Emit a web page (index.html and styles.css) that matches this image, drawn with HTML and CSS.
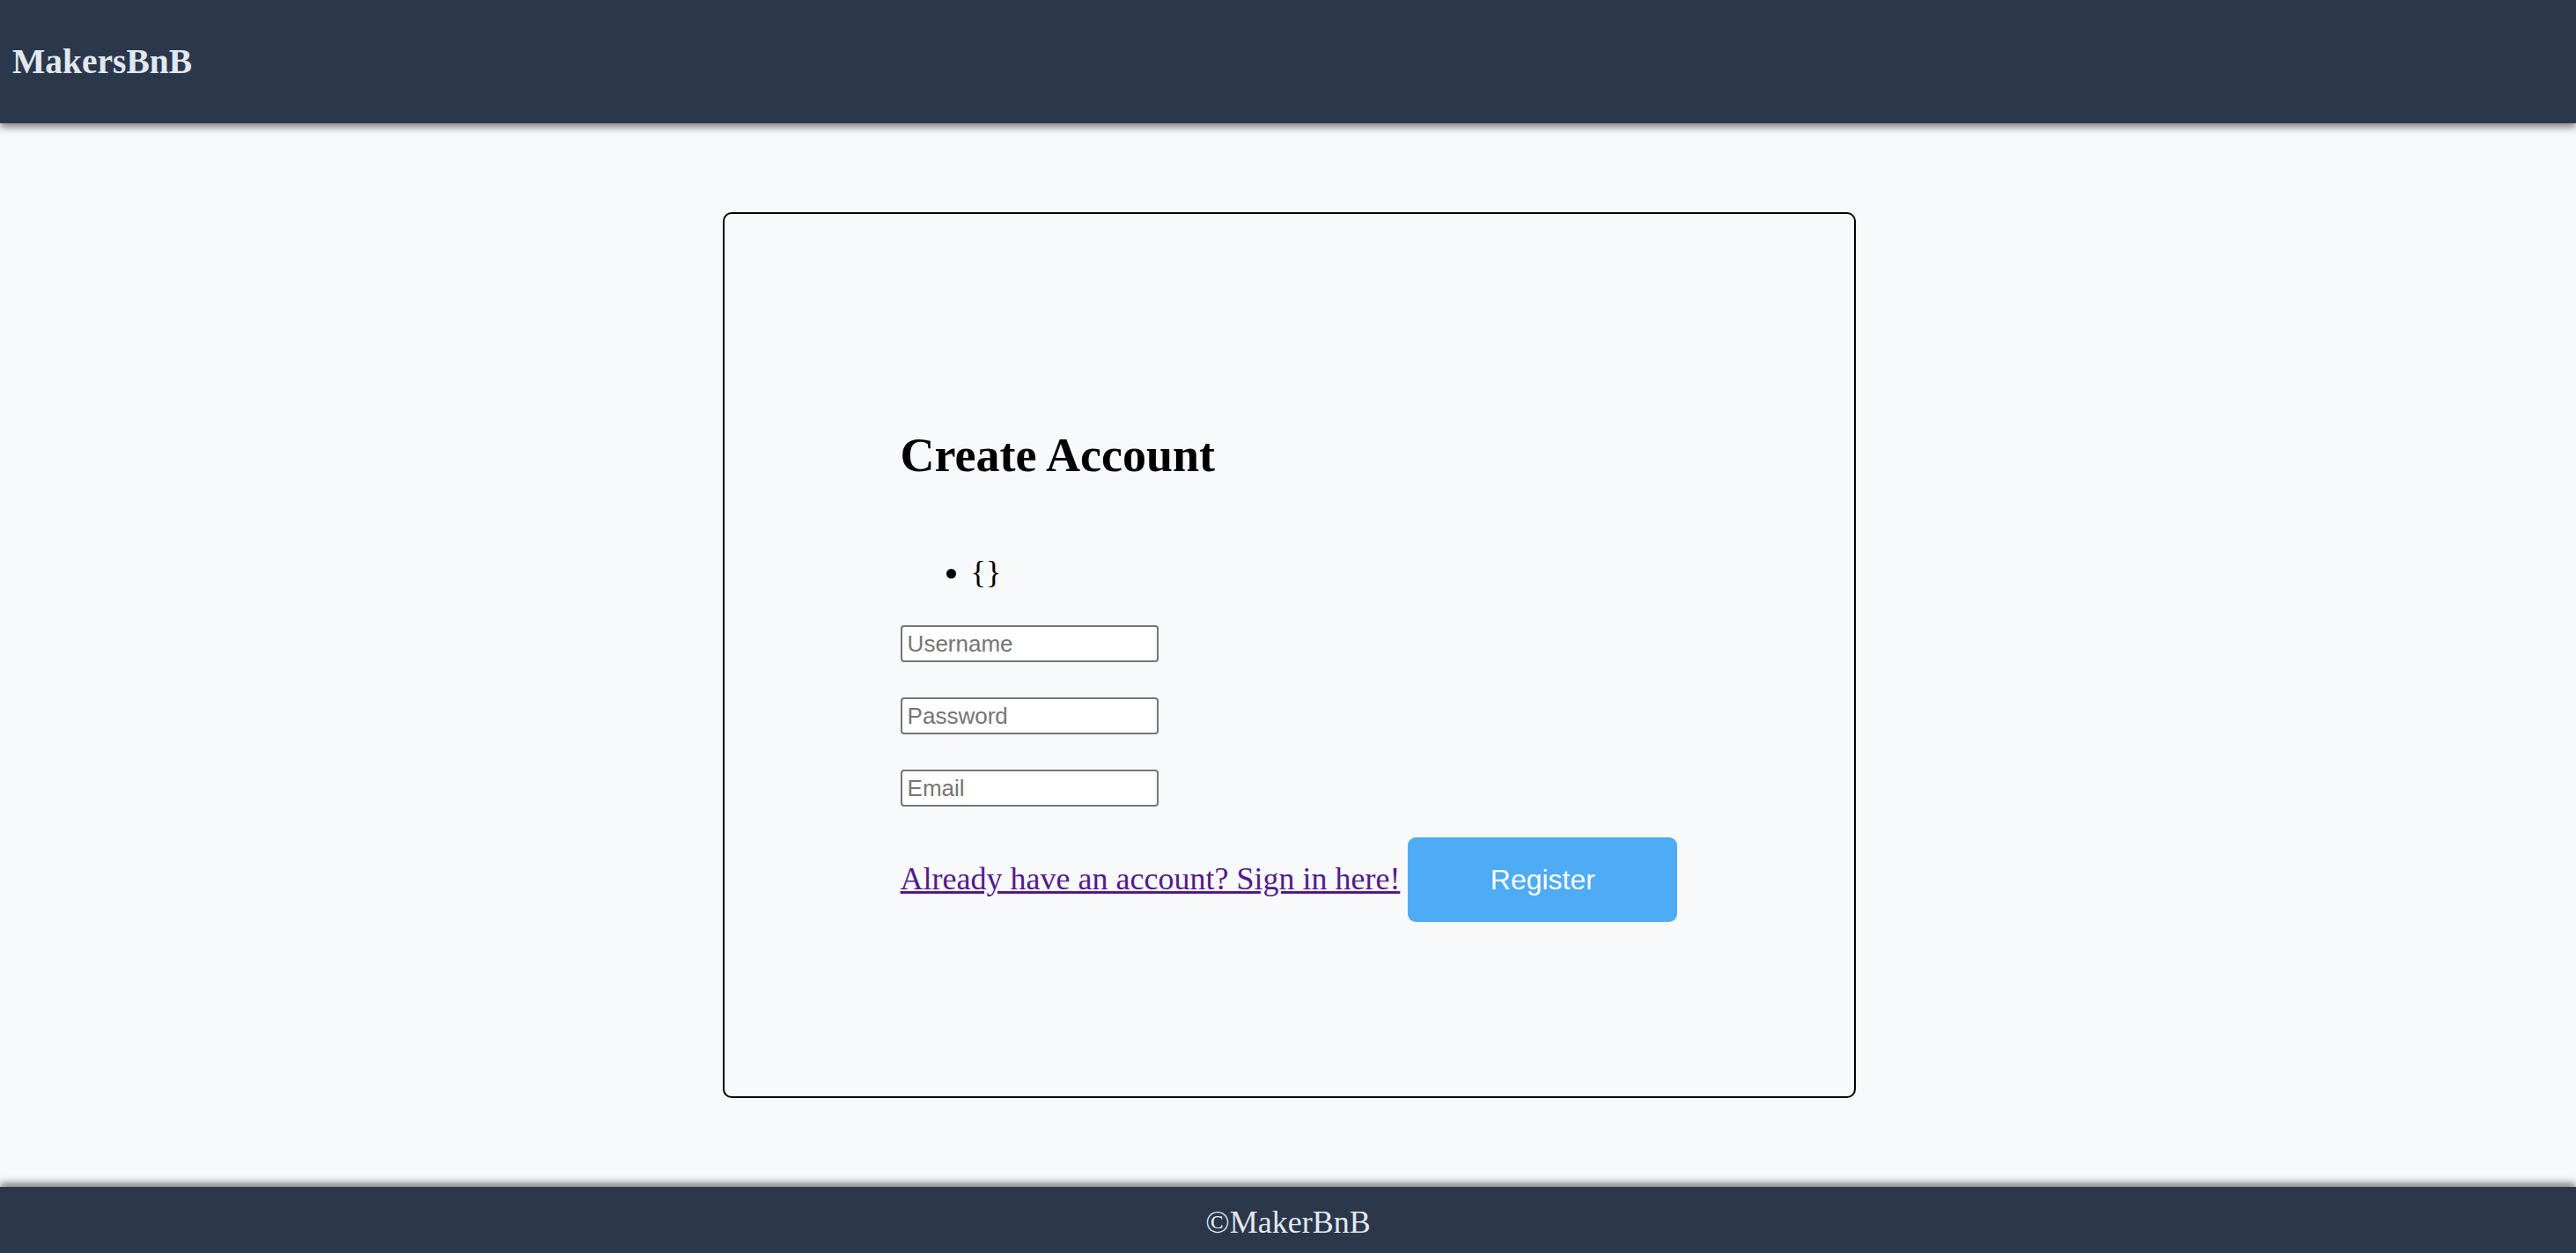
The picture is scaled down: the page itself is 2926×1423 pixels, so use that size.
FILE: index.html
```html
<!DOCTYPE html>
<html lang="en">
<head>
<meta charset="utf-8">
<title>MakersBnB</title>
<link rel="stylesheet" href="styles.css">
</head>
<body>
<header class="site-header">
  <span class="brand">MakersBnB</span>
</header>
<main class="page">
  <section class="card">
    <div class="card-inner">
      <h2 class="title">Create Account</h2>
      <ul class="errors">
        <li>{}</li>
      </ul>
      <form class="form">
        <input class="field" type="text" placeholder="Username">
        <input class="field" type="password" placeholder="Password">
        <input class="field" type="email" placeholder="Email">
        <div class="actions">
          <a class="signin" href="#">Already have an account? Sign in here!</a>
          <button class="register" type="button">Register</button>
        </div>
      </form>
    </div>
  </section>
</main>
<footer class="site-footer">©MakerBnB</footer>
</body>
</html>
```

FILE: styles.css
```css
html, body {
  margin: 0;
  padding: 0;
}

body {
  background: #f7f9fb;
  font-family: "Liberation Serif", "Times New Roman", serif;
  color: #000;
  height: 1423px;
  display: flex;
  flex-direction: column;
  overflow: hidden;
}

.site-header {
  position: relative;
  z-index: 2;
  height: 140px;
  flex: none;
  background: #2b374b;
  display: flex;
  align-items: center;
  padding-left: 14px;
  box-shadow: 0 5px 8px rgba(0, 0, 0, 0.45);
}

.brand {
  color: #e2e8f0;
  font-weight: bold;
  font-size: 39.5px;
}

.page {
  flex: 1;
  display: flex;
  justify-content: center;
  align-items: center;
}

.card {
  box-sizing: border-box;
  width: 1287px;
  height: 1006px;
  margin-left: 2px;
  border: 2px solid #000;
  border-radius: 10px;
  display: flex;
  justify-content: center;
  padding-top: 244px;
}

.card-inner {
  display: flex;
  flex-direction: column;
}

.title {
  margin: 0;
  font-size: 54px;
  line-height: 60px;
  font-weight: bold;
}

.errors {
  margin: 83px 0 40px;
  padding-left: 80px;
  font-size: 36px;
  line-height: 40px;
}

.form {
  display: flex;
  flex-direction: column;
  align-items: flex-start;
}

.field {
  box-sizing: border-box;
  width: 293px;
  height: 42px;
  margin: 0 0 40px;
  padding: 2px 6px;
  border: 2px solid #767676;
  border-radius: 4px;
  background: #fff;
  font-family: "Liberation Sans", Arial, sans-serif;
  font-size: 26px;
  color: #000;
}

.field:last-of-type {
  margin-bottom: 35px;
}

.field::placeholder {
  color: #757575;
}

.actions {
  display: flex;
  align-items: baseline;
  gap: 9px;
}

.signin {
  font-size: 36px;
  color: #551a8b;
  text-decoration: underline;
}

.register {
  width: 306px;
  height: 96px;
  border: none;
  border-radius: 9px;
  background: #4eabf5;
  color: #fff;
  font-family: "Liberation Sans", Arial, sans-serif;
  font-size: 32px;
  padding: 0;
}

.site-footer {
  position: relative;
  z-index: 2;
  flex: none;
  height: 75px;
  background: #2b374b;
  color: #e2e8f0;
  font-size: 36px;
  display: flex;
  align-items: center;
  justify-content: center;
  padding-top: 4px;
  box-sizing: border-box;
  box-shadow: 0 -5px 8px rgba(0, 0, 0, 0.45);
}
```
